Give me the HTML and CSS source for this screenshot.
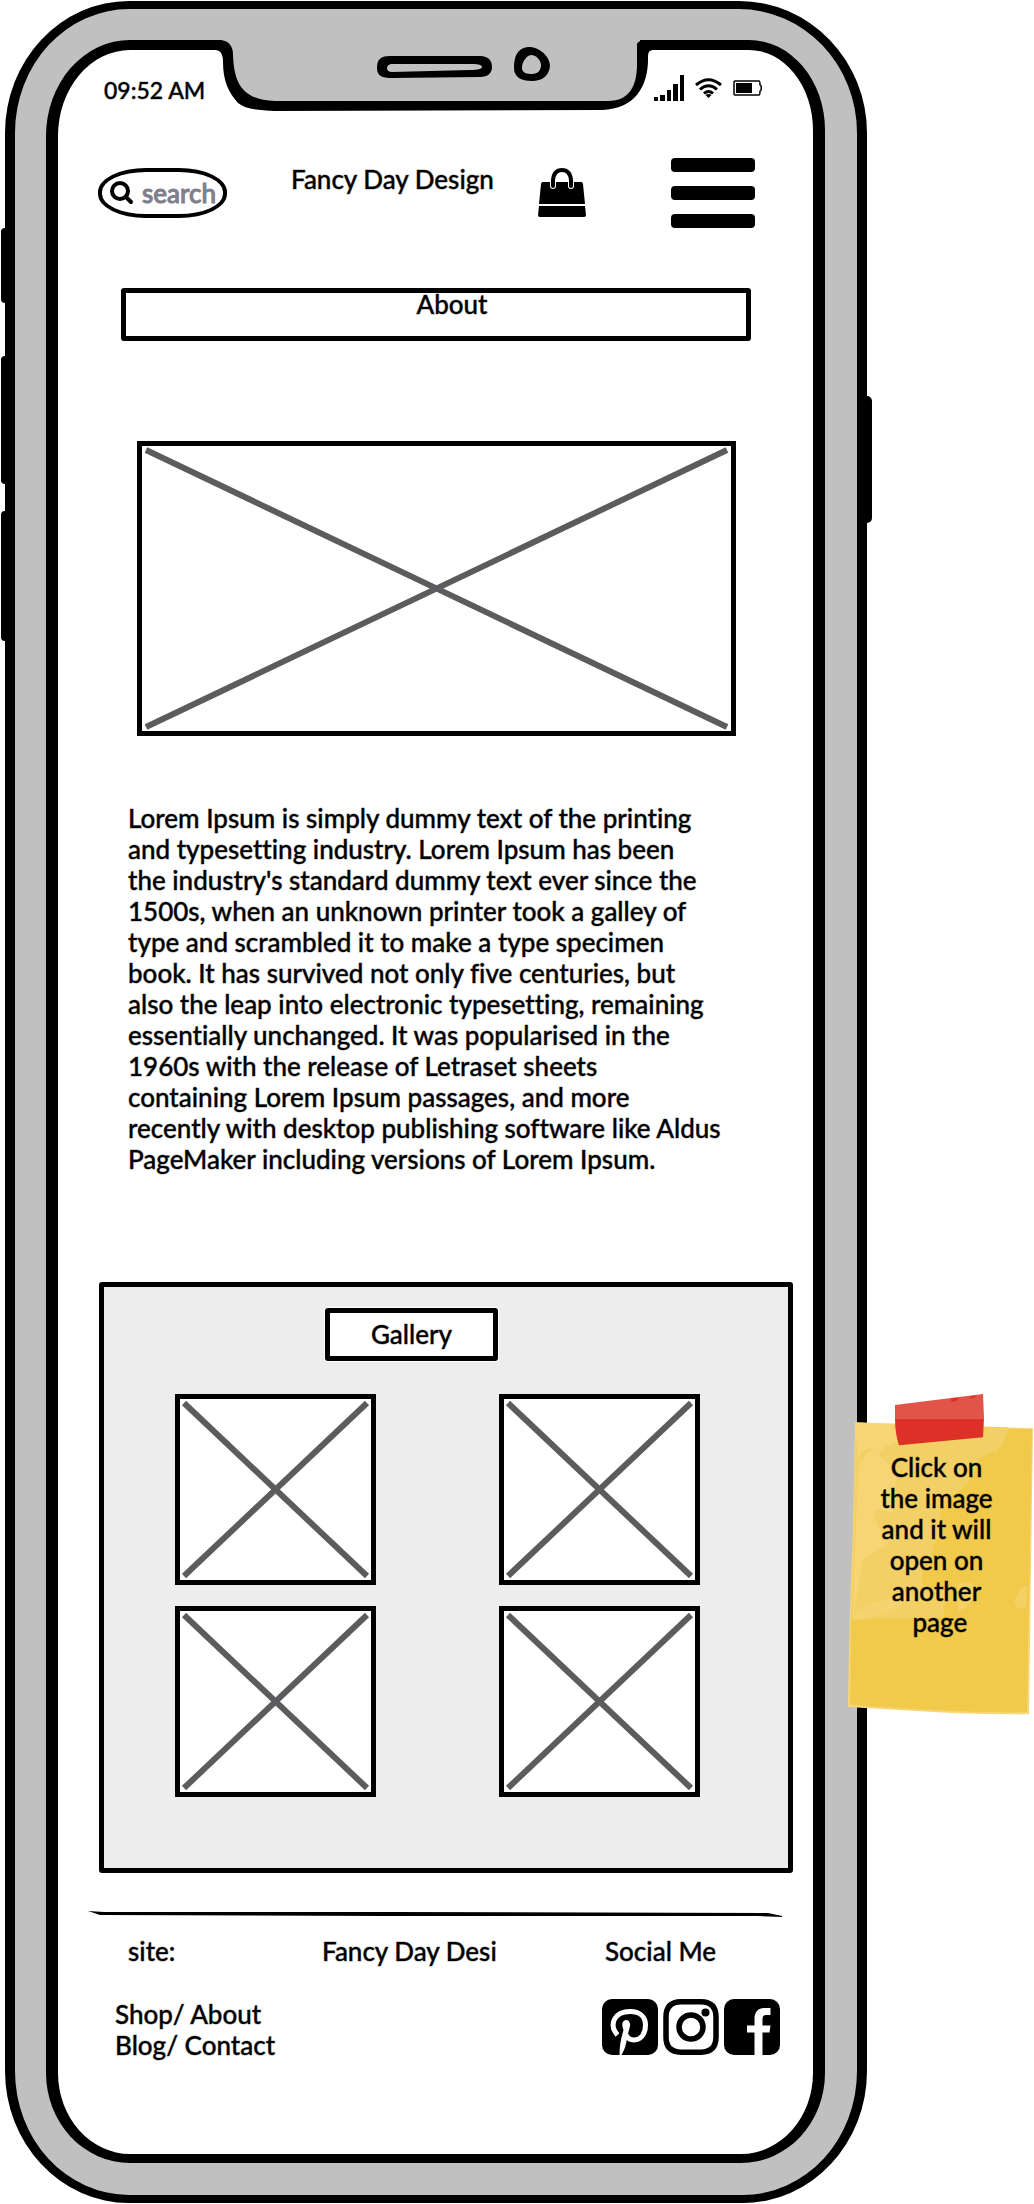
FILE: index.html
```html
<!DOCTYPE html>
<html lang="en">
<head>
<meta charset="utf-8">
<meta name="viewport" content="width=device-width, initial-scale=1">
<title>Fancy Day Design – About</title>
<link rel="stylesheet" href="styles.css">
</head>
<body>
<div class="board">
  <div class="phone">
    <span class="key key-mute"></span>
    <span class="key key-up"></span>
    <span class="key key-down"></span>
    <span class="key key-power"></span>
    <div class="screen">
      <svg class="notch" viewBox="205 40 455 72" aria-hidden="true">
        <path fill="#c0c0c0" d="M222 40H640V70C640 90 630 104 604 105H275C240 104 230 88 228 60Z"/>
        <path d="M205 40H220Q233 41 233 55C234 80 240 100 275 101H608C630 101 637 85 637 64V44Q638 41 642 41H660V50H653Q648 50 648 56C649 85 636 109 602 110L275 111C257 110 245 109 238 103C228 92 223 80 223 62Q223 50 215 50H205Z"/>
        <path fill-rule="evenodd" d="M390 56H480C489 56 492 61 492 67C492 73 488 77 480 77L392 78C382 78 377 76 377 68C377 59 381 56 390 56ZM391 64Q387 65 387 68Q387 72 392 72L470 70C478 70 482 69 482 67C482 65 479 64 472 64Z"/>
        <path fill-rule="evenodd" d="M528 47C537 46 550 55 550 66C549 76 542 81 532 81C521 81 514 77 514 68C514 57 517 48 528 47ZM531 55C526 56 522 62 522 68C522 73 527 74 532 74C538 74 541 70 541 65C541 60 536 55 531 55Z"/>
      </svg>
      <div class="status">
        <time class="clock">09:52 AM</time>
        <div class="indicators">
          <svg width="30" height="26" viewBox="0 0 30 26" aria-hidden="true"><path d="M0 22H4V26H0ZM6 20H11V26H6ZM13 15H17V26H13ZM19 9H24V26H19ZM26 0H30V26H26Z"/></svg>
          <svg width="27" height="20" viewBox="0 0 27 20" fill="none" stroke="#000" stroke-width="3" aria-hidden="true"><path d="M1 7Q13.500-3.500 26 7M5 11.500Q13.500 4 22 11.500M9 15.500Q13.500 11.500 18 15.500"/><path fill="#000" stroke="none" d="M10.500 17Q13.500 15 16.500 17L13.500 20Z"/></svg>
          <svg width="29" height="16" viewBox="0 0 29 16" aria-hidden="true"><path fill="none" stroke="#000" stroke-width="1.500" d="M2 1H26Q27 1 27 5L28.200 6V10L27 11Q27 15 26 15H2Q1 15 1 14V2Q1 1 2 1Z"/><path d="M3 3H19V13H3Z"/></svg>
        </div>
      </div>

      <header class="header">
        <label class="search">
          <svg width="24" height="24" viewBox="0 0 24 24" fill="none" stroke="#000" stroke-width="4" stroke-linecap="round" aria-hidden="true"><circle cx="10" cy="10" r="8"/><path d="M16 16L21 21"/></svg>
          <input type="search" placeholder="search" aria-label="Search">
        </label>
        <p class="brand">Fancy Day Design</p>
        <a class="bag" href="#bag" aria-label="Shopping bag">
          <svg width="48" height="49" viewBox="0 0 48 49" aria-hidden="true"><path d="M5 14H43Q45 14 45 16L47 36H1L3 16Q3 14 5 14ZM1 38H47L48 47Q48 49 46 49H2Q0 49 0 47Z"/><path fill="none" stroke="#fff" stroke-width="6" stroke-linecap="round" d="M15 14V18M33 14V18"/><path fill="none" stroke="#000" stroke-width="4" stroke-linecap="round" d="M15 18V12Q16 2 24 2T33 12V18"/></svg>
        </a>
        <button class="menu" type="button" aria-label="Menu"><span></span><span></span><span></span></button>
      </header>

      <main>
        <h1 class="page-title">About</h1>
        <div class="placeholder hero">
          <svg aria-hidden="true"><line x1="0" y1="0" x2="100%" y2="100%"/><line x1="100%" y1="0" x2="0" y2="100%"/></svg>
        </div>
        <p class="story">Lorem Ipsum is simply dummy text of the printing<br>
          and typesetting industry. Lorem Ipsum has been<br>
          the industry's standard dummy text ever since the<br>
          1500s, when an unknown printer took a galley of<br>
          type and scrambled it to make a type specimen<br>
          book. It has survived not only five centuries, but<br>
          also the leap into electronic typesetting, remaining<br>
          essentially unchanged. It was popularised in the<br>
          1960s with the release of Letraset sheets<br>
          containing Lorem Ipsum passages, and more<br>
          recently with desktop publishing software like Aldus<br>
          PageMaker including versions of Lorem Ipsum.</p>

        <section class="gallery">
          <h2 class="gallery-title">Gallery</h2>
          <div class="tiles">
            <a class="placeholder" href="#image-1" aria-label="Image 1"><svg aria-hidden="true"><line x1="0" y1="0" x2="100%" y2="100%"/><line x1="100%" y1="0" x2="0" y2="100%"/></svg></a>
            <a class="placeholder" href="#image-2" aria-label="Image 2"><svg aria-hidden="true"><line x1="0" y1="0" x2="100%" y2="100%"/><line x1="100%" y1="0" x2="0" y2="100%"/></svg></a>
            <a class="placeholder" href="#image-3" aria-label="Image 3"><svg aria-hidden="true"><line x1="0" y1="0" x2="100%" y2="100%"/><line x1="100%" y1="0" x2="0" y2="100%"/></svg></a>
            <a class="placeholder" href="#image-4" aria-label="Image 4"><svg aria-hidden="true"><line x1="0" y1="0" x2="100%" y2="100%"/><line x1="100%" y1="0" x2="0" y2="100%"/></svg></a>
          </div>
        </section>
      </main>

      <svg class="rule" viewBox="0 0 694 6" preserveAspectRatio="none" aria-hidden="true"><path d="M0 0L16 1L300 1L680 2L694 5V6L670 5L300 5L12 4Z"/></svg>

      <footer class="footer">
        <div class="footer-heads">
          <p>site:</p>
          <p>Fancy Day Desi</p>
          <p>Social Me</p>
        </div>
        <div class="footer-body">
          <nav class="links">
            <div><a href="#shop">Shop</a>/ <a href="#about">About</a></div>
            <div><a href="#blog">Blog</a>/ <a href="#contact">Contact</a></div>
          </nav>
          <div class="social">
            <a href="#pinterest" aria-label="Pinterest"><svg width="56" height="56" viewBox="0 0 56 56" aria-hidden="true"><rect width="56" height="56" rx="10"/><path fill="none" stroke="#fff" stroke-width="5" d="M15.500 36C6 25 13 12.500 28 12.500C38 12.500 43.500 18 43.500 26C43.500 36 38 41 32 41C28 41 25.500 39 24.500 36"/><path fill="#fff" d="M20.500 24C22 19 29 20 28 27L25 39C24 46 23 50 19.500 56H17.500C17.500 48 18.500 41 21.500 31C20.500 29 20 26 20.500 24Z"/></svg></a>
            <a href="#instagram" aria-label="Instagram"><svg width="56" height="56" viewBox="0 0 56 56" aria-hidden="true"><path fill="none" stroke="#000" stroke-width="5.500" d="M18 2.800H38Q53 3 53 18V38Q53 53 38 53.200H18Q3 53 3 38V18Q3 3 18 2.800Z"/><circle cx="28" cy="28" r="12" fill="none" stroke="#000" stroke-width="5.500"/><circle cx="42.500" cy="13.500" r="4"/></svg></a>
            <a href="#facebook" aria-label="Facebook"><svg width="56" height="56" viewBox="0 0 56 56" aria-hidden="true"><rect width="56" height="56" rx="10"/><path fill="#fff" d="M30.500 56V33.500H23V26.500H30.500V20C30.500 12 35 9 41 9H46.500V16H42Q38.500 16 38.500 20V26.500H46.500L45.500 33.500H38.500V56Z"/></svg></a>
          </div>
        </div>
      </footer>
    </div>
  </div>

  <aside class="note">
    <svg class="paper" viewBox="0 0 185 320" preserveAspectRatio="none" aria-hidden="true">
      <path fill="#f6d778" d="M7 29L185 35L181 319Q140 320 85 317L0 312Q1 230 5 135Z"/>
      <path fill="#f1ca4c" d="M9 32L184 36L179 317Q140 318 85 315L2 310L3 223L26 35Z"/>
      <path fill="#f3d066" d="M8 31L160 34Q160 46 148 59Q130 60 128 75Q122 90 110 98Q85 115 94 143Q85 145 83 165Q73 170 74 190Q85 195 98 196L96 223L3 225Z"/>
      <path fill="#f6d778" d="M7 29L43 31L54 46Q36 52 30 60Q14 48 10 68ZM11 70Q24 50 30 60L50 80Q44 100 45 120Q25 110 26 124L40 150L15 165L5 222Q8 120 11 70Z" opacity=".8"/>
      <path fill="#f6d778" d="M5 218Q40 200 75 198Q40 222 6 226ZM110 190Q130 184 128 200Q118 216 110 218ZM166 209Q172 190 179 192L178 212Q170 218 166 209Z" opacity=".55"/>
      <path fill="#e0544a" d="M47 12L135 1L136 25H47Z"/>
      <path fill="#dd3027" d="M47 25H136L135 44L51 52Q47 40 47 25ZM103 6Q108 4 111 5Q108 10 103 8ZM122 4L128 2Q127 6 122 5Z"/>
    </svg>
    <p class="note-text">Click on<br>the image<br>and it will<br>open on<br>another<br>&nbsp;page</p>
  </aside>
</div>
</body>
</html>
```
FILE: styles.css
```css
* {
  box-sizing: border-box;
}

body {
  margin: 0;
  background: #fff;
  color: #000;
  font: 500 26px/31px Lato, "Open Sans", sans-serif;
  font-variant-ligatures: none;
  -webkit-text-stroke: 1px rgb(0 0 0 / 40%);
}

h1,
h2,
p {
  margin: 0;
  font-size: inherit;
  font-weight: inherit;
}

a {
  color: inherit;
  text-decoration: none;
}

svg {
  display: block;
}

.board {
  display: grid;
  grid-template-columns: minmax(0, 1fr) 166px;
  align-items: start;
  padding: 1px 1px 1px 5px;
}

/* Phone body */
.phone {
  position: relative;
  padding: 31px 32px 32px 31px;
  border: solid #000;
  border-width: 8px 10px;
  border-radius: 124px 128px 124px 124px / 132px;
  background: #c0c0c0;
}

.key {
  position: absolute;
  width: 6px;
  background: #000;
}

.key-mute,
.key-up,
.key-down {
  left: -14px;
  border-radius: 4px 0 0 4px;
}

.key-mute {
  top: 219px;
  height: 75px;
}

.key-up {
  top: 347px;
  height: 128px;
}

.key-down {
  top: 502px;
  height: 130px;
}

.key-power {
  top: 387px;
  right: -15px;
  height: 127px;
  border-radius: 0 5px 5px 0;
}

.screen {
  position: relative;
  border: solid #000;
  border-width: 10px 12px 9px;
  border-radius: 84px 76px 84px 84px / 96px 90px 90px 90px;
  background: #fff;
}

.notch {
  position: absolute;
  top: -10px;
  left: 147px;
  width: 455px;
  height: 72px;
}

.status {
  display: flex;
  align-items: center;
  justify-content: space-between;
  height: 80px;
  padding: 0 51px 0 46px;
}

.clock {
  font-size: 23px;
}

.indicators {
  display: flex;
  align-items: center;
  gap: 11px;
  padding-bottom: 4px;
}

/* Site header */
.header {
  display: flex;
  align-items: flex-start;
  padding: 28px 58px 0 40px;
}

.search {
  display: flex;
  align-items: center;
  gap: 8px;
  width: 129px;
  height: 50px;
  margin-top: 10px;
  padding-left: 8px;
  border: 4px solid #000;
  border-radius: 48px / 24px;
}

.search svg {
  flex: none;
}

.search input {
  flex: 1;
  min-width: 0;
  padding: 0;
  border: 0;
  outline: 0;
  background: none;
  color: #000;
  font: inherit;
  appearance: none;
}

.search input::-webkit-search-cancel-button {
  display: none;
}

.search input::placeholder {
  color: #80808c;
  opacity: 1;
  -webkit-text-stroke: 1px #80808c;
}

.brand {
  flex: 1;
  padding: 6px 0 0 64px;
  white-space: nowrap;
}

.bag {
  margin: 10px 85px 0 0;
}

.menu {
  display: grid;
  gap: 14px;
  width: 84px;
  padding: 0;
  border: 0;
  background: none;
}

.menu span {
  height: 14px;
  border-radius: 4px;
  background: #000;
}

/* About */
.page-title {
  height: 53px;
  margin: 60px 62px 0 63px;
  padding-left: 32px;
  border: 5px solid #000;
  border-radius: 3px;
  line-height: 22px;
  text-align: center;
}

.placeholder {
  display: block;
  padding: 4px;
  border: 5px solid #000;
  background: #fff;
}

.placeholder svg {
  width: 100%;
  height: 100%;
  overflow: visible;
}

.placeholder line {
  stroke: #5c5c5e;
  stroke-width: 6px;
}

.hero {
  height: 295px;
  margin: 100px 77px 0 79px;
}

.story {
  margin: 67px 0 0 70px;
  white-space: nowrap;
}

.gallery {
  margin: 107px 20px 0 41px;
  padding: 21px 88px 71px 71px;
  border: 5px solid #000;
  border-radius: 3px;
  background: #ededed;
}

.gallery-title {
  width: 173px;
  height: 53px;
  margin-left: 150px;
  border: 5px solid #000;
  border-radius: 3px;
  background: #fff;
  box-shadow: 0 0 0 1px #fff;
  line-height: 42px;
  text-align: center;
}

.tiles {
  display: grid;
  grid-template-columns: 201px 201px;
  grid-auto-rows: 191px;
  justify-content: space-between;
  row-gap: 21px;
  margin-top: 33px;
}

/* Footer */
.rule {
  width: calc(100% - 61px);
  height: 6px;
  margin: 38px 31px 0 30px;
}

.footer {
  padding: 19px 33px 93px 57px;
}

.footer-heads {
  display: grid;
  grid-template-columns: 194px 1fr 175px;
  padding-left: 13px;
}

.footer-body {
  display: flex;
  justify-content: space-between;
  margin-top: 32px;
}

.social {
  display: flex;
  gap: 5px;
}

/* Sticky note */
.note {
  position: relative;
  height: 322px;
  margin: 1392px 0 0 -19px;
  padding-top: 59px;
}

.paper {
  position: absolute;
  inset: 0;
  width: 100%;
  height: 100%;
}

.note-text {
  position: relative;
  padding-right: 8px;
  text-align: center;
}
```
